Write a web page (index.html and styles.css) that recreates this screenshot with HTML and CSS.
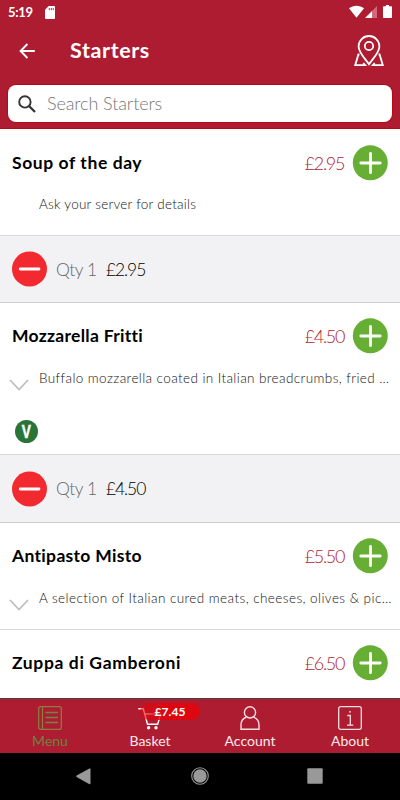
FILE: index.html
```html
<!DOCTYPE html>
<html lang="en">
<head>
<meta charset="utf-8">
<title>Starters</title>
<link rel="stylesheet" href="styles.css">
</head>
<body>
<svg class="defs" width="0" height="0">
  <symbol id="plus" viewBox="0 0 36 36"><circle cx="18.300" cy="17.800" r="17.500" fill="#67ae35"/><path d="M18.500 8.300v19.400M8.800 18h19.400" stroke="#fff" stroke-width="2.800" stroke-linecap="round"/></symbol>
  <symbol id="minus" viewBox="0 0 36 36"><circle cx="17.500" cy="18" r="17.500" fill="#f2292e"/><path d="M8.200 18h18.800" stroke="#fff" stroke-width="2.800" stroke-linecap="round"/></symbol>
  <symbol id="chevron" viewBox="0 0 20 12"><path d="M1 1l9 9.600L19 1" fill="none" stroke="#bdbdbd" stroke-width="1.700"/></symbol>
</svg>
<header class="header">
  <div class="status">
    <span class="clock">5:19</span>
    <svg class="card-icon" width="10" height="13" viewBox="0 0 10 13"><path fill="#fff" d="M3.700 0H9a1 1 0 0 1 1 1v11a1 1 0 0 1-1 1H1a1 1 0 0 1-1-1V3.800z"/><path d="M4.300 2v2.200M6.300 2v2.200M8.200 2v2.200" stroke="#ae1c31" stroke-width=".9"/></svg>
    <svg class="signals" width="44" height="14" viewBox="0 0 44 14"><path fill="#fff" d="M0 3.300C4.300-.1 10.700-.1 15 3.300L7.500 12.700z"/><path fill="#cf6b79" d="M28 1v12h-5V6z"/><path fill="#fff" d="M23 6v7h-7z"/><path fill="#fff" d="M37 0h3v1.200h2.300a.7.7 0 0 1 .7.7v10.400a.7.7 0 0 1-.7.7h-7.600a.7.7 0 0 1-.7-.7V1.900a.7.7 0 0 1 .7-.7H37z"/></svg>
  </div>
  <div class="appbar">
    <svg class="back" width="16" height="16" viewBox="0 0 16 16"><path d="M15.800 8H1.800M8.400 1L1.600 8l6.800 7" fill="none" stroke="#fff" stroke-width="1.900"/></svg>
    <h1 class="title">Starters</h1>
    <svg class="map" width="30" height="32" viewBox="0 0 30 32" fill="none" stroke="#fff" stroke-width="1.800"><path d="M15 29.200C11.300 23.800 4.600 17.500 4.600 11.400a10.400 10.400 0 0 1 20.800 0C25.400 17.500 18.700 23.800 15 29.200z"/><circle cx="15" cy="11" r="4.200"/><path d="M5.500 19.500H4.400L1.200 30.200h10L9.300 28M24.500 19.500h1.100l3.200 10.700h-10l1.900-2.200"/></svg>
  </div>
  <div class="search">
    <svg width="18" height="18" viewBox="0 0 18 18" fill="none" stroke="#333"><circle cx="6.900" cy="6.900" r="5.700" stroke-width="1.900"/><path d="M11 11l6 6" stroke-width="2.300"/></svg>
    <span class="placeholder">Search Starters</span>
  </div>
</header>
<main class="list">
  <section class="item">
    <div class="row"><h2 class="name soup">Soup of the day</h2><span class="price">£2.95</span><svg class="btn"><use href="#plus"/></svg></div>
    <div class="detail"><span class="mark"></span><p class="desc ask">Ask your server for details</p></div>
  </section>
  <section class="qty"><svg class="btn"><use href="#minus"/></svg><span class="count">Qty 1</span><span class="sum">£2.95</span></section>
  <section class="item tall">
    <div class="row"><h2 class="name mozz">Mozzarella Fritti</h2><span class="price">£4.50</span><svg class="btn"><use href="#plus"/></svg></div>
    <div class="detail"><svg class="mark"><use href="#chevron"/></svg><p class="desc buffalo">Buffalo mozzarella coated in Italian breadcrumbs, fried …</p></div>
    <div class="veg"><span>V</span></div>
  </section>
  <section class="qty second"><svg class="btn"><use href="#minus"/></svg><span class="count">Qty 1</span><span class="sum">£4.50</span></section>
  <section class="item third">
    <div class="row"><h2 class="name anti">Antipasto Misto</h2><span class="price">£5.50</span><svg class="btn"><use href="#plus"/></svg></div>
    <div class="detail"><svg class="mark"><use href="#chevron"/></svg><p class="desc selection">A selection of Italian cured meats, cheeses, olives &amp; pic…</p></div>
  </section>
  <section class="item last">
    <div class="row"><h2 class="name zuppa">Zuppa di Gamberoni</h2><span class="price">£6.50</span><svg class="btn"><use href="#plus"/></svg></div>
  </section>
</main>
<nav class="tabs">
  <div class="tab active"><svg width="24" height="24" viewBox="0 0 24 24" fill="none" stroke="#8f7a40" stroke-width="1.300"><rect x=".7" y=".7" width="22.600" height="22.600" rx="2"/><path d="M4.500 .7v22.600"/><path d="M7.500 6.500h12.500M7.500 11.500h12.500M7.500 16.500h12.500" stroke="#6f8645"/></svg><span>Menu</span></div>
  <div class="tab"><svg width="24" height="24" viewBox="0 0 24 24" fill="none" stroke="#fff" stroke-width="1.400"><path d="M.3 2.700h5l4.200 15.600h10.200l3-10.300H6.800"/><circle cx="10.600" cy="21.700" r="1" fill="#fff"/><circle cx="18" cy="21.700" r="1" fill="#fff"/></svg><span>Basket</span><b class="badge">£7.45</b></div>
  <div class="tab"><svg width="24" height="24" viewBox="0 0 24 24" fill="none" stroke="#f6dfe2" stroke-width="1.400"><circle cx="12" cy="6.400" r="5.600"/><path d="M8.400 11C5 12.300 3 15.200 3 19v4.200h18V19c0-3.800-2-6.700-5.400-8"/></svg><span>Account</span></div>
  <div class="tab"><svg width="24" height="24" viewBox="0 0 24 24" fill="none" stroke="#f6dfe2" stroke-width="1.300"><rect x=".7" y=".7" width="22.600" height="22.600" rx="2"/><path d="M9.300 9.500h3v9.500M9 19.200h6.300"/><circle cx="12" cy="5.800" r=".9" fill="#f6dfe2" stroke="none"/></svg><span>About</span></div>
</nav>
<footer class="system">
  <svg width="15" height="17" viewBox="0 0 15 17"><path fill="#999" d="M.6 7.600L13.500.4q1-.4 1 .6v14.600q0 1-1 .6L.6 9q-.8-.7 0-1.400z"/></svg>
  <svg width="18" height="18" viewBox="0 0 18 18"><circle cx="9" cy="9" r="8.300" fill="none" stroke="#999" stroke-width="1.100"/><circle cx="9" cy="9" r="6.700" fill="#999"/></svg>
  <svg width="16" height="16" viewBox="0 0 16 16"><rect x=".3" y=".3" width="15.400" height="15.400" rx="1" fill="#999"/></svg>
</footer>
</body>
</html>
```
FILE: styles.css
```css
* { box-sizing: border-box; margin: 0; }
body { width: 400px; height: 800px; overflow: hidden; display: flex; flex-direction: column; background: #fff; color: #000; font-family: Lato, sans-serif; font-weight: 300; white-space: nowrap; }
svg { display: block; flex: none; }
.defs { position: absolute; }
.header { height: 129px; flex: none; background: #ae1c31; border-bottom: 1px solid #b30b15; color: #fff; }
.status { height: 24px; display: flex; align-items: center; padding: 0 7px 0 8px; }
.clock { width: 37px; font-size: 13px; font-weight: 700; letter-spacing: -.3px; }
.signals { margin-left: auto; }
.appbar { height: 61px; display: flex; align-items: center; padding: 0 16px 8px 19px; }
.title { margin: -2px 0 0 35px; font-size: 21.5px; font-weight: 700; letter-spacing: .6px; }
.map { margin-left: auto; }
.search { height: 37px; margin: 0 8px; padding: 0 10px; display: flex; align-items: center; background: #fff; border-radius: 8px; box-shadow: 0 0 0 1px #b30b15; }
.placeholder { margin: -1px 0 0 11px; font-size: 18px; letter-spacing: -.1px; color: #777; }
.list { height: 569px; flex: none; overflow: hidden; }
.item { height: 107px; border-bottom: 1px solid #d9d9d9; padding: 16px 12px 0; }
.tall { height: 152px; padding-top: 15px; }
.third, .last { padding-top: 15px; }
.row { height: 36px; display: flex; align-items: center; }
.name { flex: 1; margin-top: -1px; font-size: 17.5px; font-weight: 700; letter-spacing: .32px; }
.soup { letter-spacing: .58px; }
.mozz { letter-spacing: .28px; }
.zuppa { letter-spacing: .62px; }
.price { color: #ae1c31; font-size: 18px; letter-spacing: -1.35px; margin: -1px 8px 0 0; }
.btn { width: 36px; height: 36px; }
.detail { display: flex; height: 46px; }
.mark { width: 20px; height: 12px; margin: 26px 10px 0 -3px; flex: none; }
.desc { margin-top: 14px; font-size: 13.5px; line-height: 18px; letter-spacing: .4px; color: #111; }
.ask { letter-spacing: .24px; }
.selection { letter-spacing: .43px; }
.tall .desc, .third .desc { margin-top: 15px; }
.tall .mark, .third .mark { margin-top: 25px; }
.veg { width: 23px; height: 23px; margin: 20px 0 0 3px; border-radius: 50%; background: #2b7438; display: grid; place-items: center; color: #fff; }
.veg span { font: 700 19px/21px "Liberation Sans", sans-serif; -webkit-text-stroke: .5px #fff; transform: scaleX(.72); }
.qty { height: 67px; display: flex; align-items: center; padding: 0 12px; background: #f2f2f4; border-bottom: 1px solid #ccc; font-size: 17.5px; }
.second { height: 68px; }
.count { width: 41px; margin: 0 9px 0 8px; color: #666; letter-spacing: -.5px; }
.sum { letter-spacing: -1.1px; }
.tabs { height: 55px; flex: none; border-top: 1px solid #444; background: #ae1c31; color: #fbeaec; display: flex; }
.tab { flex: 1; position: relative; display: flex; flex-direction: column; align-items: center; padding-top: 7px; font-size: 14px; line-height: 20px; letter-spacing: 0; font-weight: 400; }
.tab span { margin-top: 1px; }
.active { color: #70833f; }
.badge { position: absolute; left: 40px; top: 4px; width: 60px; height: 17px; border-radius: 9px; background: linear-gradient(90deg, rgba(220,7,17,.5), rgba(220,7,17,.75) 20%, rgba(220,7,17,.85) 36%, #dc0711 42%); color: #fff; font-size: 12px; line-height: 17px; letter-spacing: .05px; text-align: center; font-weight: 700; }
.system { height: 47px; flex: none; background: #000; display: flex; align-items: center; justify-content: space-between; padding: 0 77px 1px 76px; }
.system svg:nth-child(2) { margin-left: 2px; }
```
